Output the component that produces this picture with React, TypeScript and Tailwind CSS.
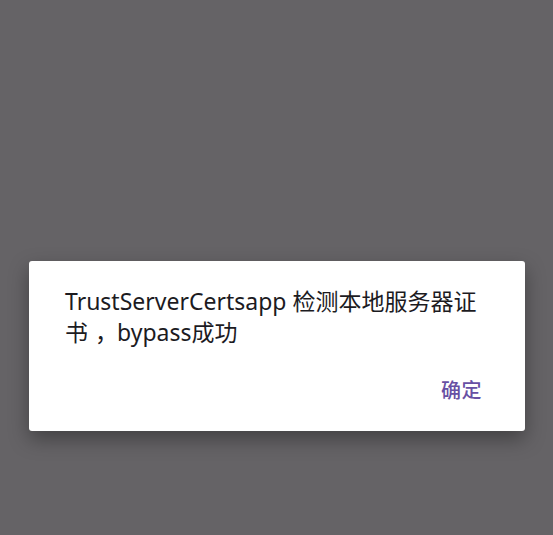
export default function App() {
  return (
    <div
      className="flex h-[535px] w-[553px] flex-col bg-[#656366] pl-[29px] pt-[261px]"
      style={{ fontFamily: '"Noto Sans", "Noto Sans CJK SC", sans-serif' }}
    >
      <div className="flex h-[170px] w-[496px] flex-col rounded-[3px] bg-white shadow-[0_8px_20px_rgba(0,0,0,0.35)]">
        <p className="px-[36px] pt-[25px] text-[23px] leading-[31px] text-[#1c1b1f]">
          TrustServerCertsapp 检测本地服务器证书
          <span className="inline-block w-[29px] pl-[7px]">，</span>bypass成功
        </p>
        <div className="mt-auto flex justify-end pb-[28px] pr-[43px]">
          <button
            type="button"
            className="text-[20px] font-medium leading-[24px] tracking-[0.5px] text-[#6750a4]"
          >
            确定
          </button>
        </div>
      </div>
    </div>
  );
}
